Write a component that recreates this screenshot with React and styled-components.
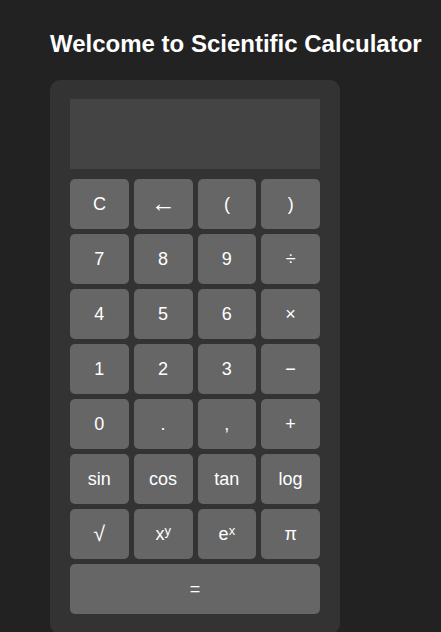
import React from 'react'
import styled, { createGlobalStyle } from 'styled-components'

const GlobalStyle = createGlobalStyle`
  html, body {
    margin: 0;
    padding: 0;
    background: #222;
    font-family: "Liberation Sans", Arial, sans-serif;
  }
`

const Page = styled.div`
  padding: 30px 0 0 50px;
  color: white;
`

const Title = styled.h2`
  margin: 0 0 22px;
  font-size: 24px;
  line-height: 28px;
  font-weight: bold;
  color: white;
  white-space: nowrap;
`

const Calculator = styled.div`
  width: 250px;
  padding: 19px 20px 20px;
  background: #333;
  border-radius: 10px;
`

const Display = styled.div`
  height: 70px;
  background: #444;
  margin-bottom: 10px;
`

const Keys = styled.div`
  display: grid;
  grid-template-columns: repeat(4, 1fr);
  grid-auto-rows: 50px;
  gap: 5px;
`

const Key = styled.button`
  grid-column: ${p => (p.$wide ? '1 / -1' : 'auto')};
  background: #666;
  color: white;
  border: none;
  border-radius: 5px;
  font-family: "Liberation Sans", Arial, sans-serif;
  font-size: 18px;
  padding: 0;
  cursor: pointer;

  sup {
    font-size: 13px;
    vertical-align: 5px;
    line-height: 0;
  }
`

const Symbol = styled.span`
  font-size: ${p => p.$size || 18}px;
  line-height: 1;
`

const keys = [
  'C', <Symbol $size={25}>←</Symbol>, '(', ')',
  '7', '8', '9', '÷',
  '4', '5', '6', '×',
  '1', '2', '3', '−',
  '0', '.', ',', '+',
  'sin', 'cos', 'tan', 'log',
  <Symbol $size={21}>√</Symbol>, <>x<sup>y</sup></>, <>e<sup>x</sup></>, 'π',
]

const App = () => {
  return (
    <Page>
      <GlobalStyle />
      <Title>Welcome to Scientific Calculator</Title>
      <Calculator>
        <Display />
        <Keys>
          {keys.map((k, i) => (
            <Key key={i}>{k}</Key>
          ))}
          <Key $wide>=</Key>
        </Keys>
      </Calculator>
    </Page>
  )
}

export default App
